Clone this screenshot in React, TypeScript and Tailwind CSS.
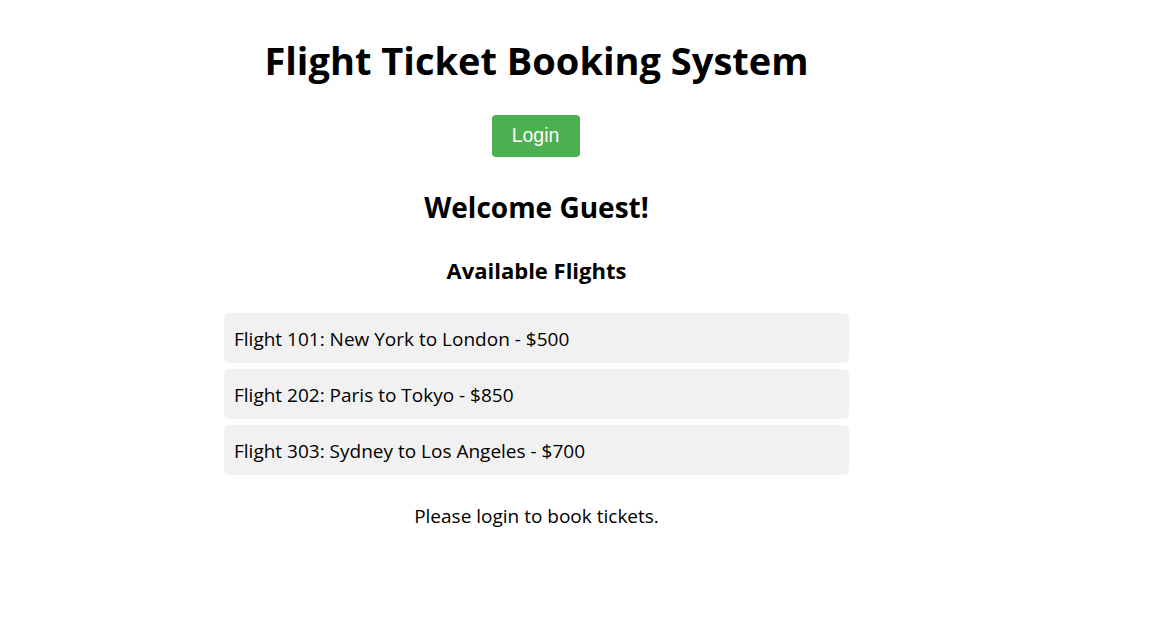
export default function App() {
  const flights = [
    "Flight 101: New York to London - $500",
    "Flight 202: Paris to Tokyo - $850",
    "Flight 303: Sydney to Los Angeles - $700",
  ];

  return (
    <div className="w-[1073px] bg-white text-black" style={{ fontFamily: '"Open Sans", "Noto Sans", sans-serif' }}>
      <div className="mx-auto w-[625px] flex flex-col items-center pt-[38px]">
        <h1 className="text-[38px] leading-[44px] font-bold">Flight Ticket Booking System</h1>

        <button
          className="mt-[33px] h-[42px] w-[88px] rounded-[4px] bg-[#4caf50] text-white text-[19.5px] -translate-x-px"
          style={{ fontFamily: '"Liberation Sans", Arial, sans-serif' }}
        >
          Login
        </button>

        <h2 className="mt-[32px] text-[28px] leading-[36px] font-bold">Welcome Guest!</h2>

        <h3 className="mt-[31px] text-[22px] leading-[28px] font-bold">Available Flights</h3>

        <ul className="mt-[29px] w-full flex flex-col gap-[6px]">
          {flights.map((f) => (
            <li key={f} className="h-[50px] flex items-center px-[10px] pt-[2px] bg-[#f1f1f1] rounded-[5px] text-[19px]">
              {f}
            </li>
          ))}
        </ul>

        <p className="mt-[28px] text-[19px] leading-[26px]">Please login to book tickets.</p>
      </div>
    </div>
  );
}
